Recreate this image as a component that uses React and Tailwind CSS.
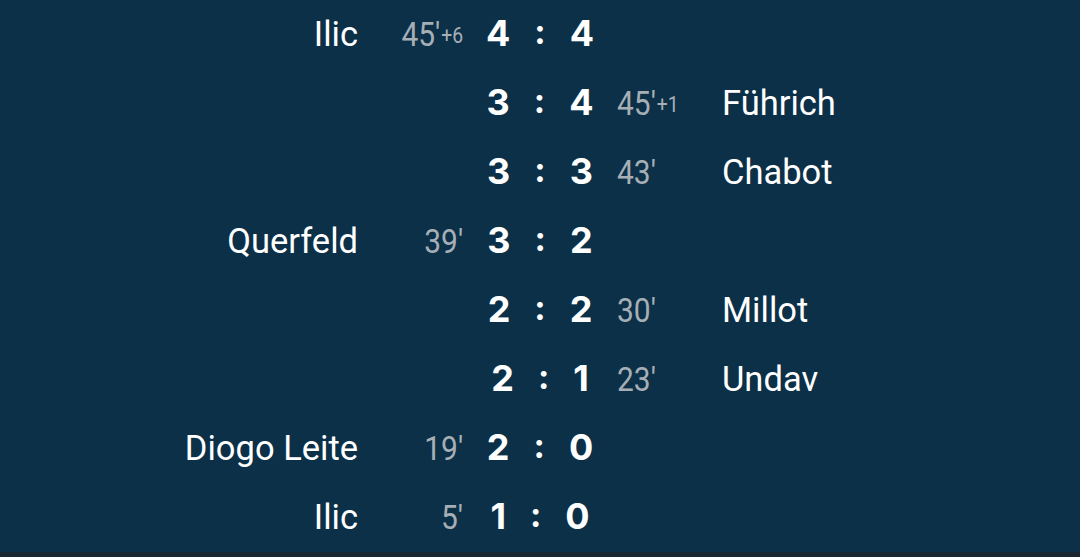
import React from "react";

const goals = [
  { home: "Ilic", homeMin: "45′", homeAdd: "+6", score: ["4", "4"] },
  { away: "Führich", awayMin: "45′", awayAdd: "+1", score: ["3", "4"] },
  { away: "Chabot", awayMin: "43′", score: ["3", "3"] },
  { home: "Querfeld", homeMin: "39′", score: ["3", "2"] },
  { away: "Millot", awayMin: "30′", score: ["2", "2"] },
  { away: "Undav", awayMin: "23′", score: ["2", "1"] },
  { home: "Diogo Leite", homeMin: "19′", score: ["2", "0"] },
  { home: "Ilic", homeMin: "5′", score: ["1", "0"] },
];

const font = { fontFamily: "Roboto, 'Liberation Sans', sans-serif" };

function Minute({ min, add, side }) {
  if (!min) return null;
  return (
    <span
      className={`inline-block text-[34px] text-[#a7afb6] leading-none scale-x-[0.88] ${
        side === "home" ? "origin-right" : "origin-left"
      }`}
      style={font}
    >
      {min}
      {add && <sup className="text-[22px] relative -top-[3px] ml-[1px]">{add}</sup>}
    </span>
  );
}

export default function App() {
  return (
    <div className="w-[1080px] h-[557px] bg-[#1a2731] overflow-hidden">
      <div className="bg-[#0b3048] h-[552px] flex flex-col">
        {goals.map((g, i) => (
          <div
            key={i}
            className="h-[69px] grid grid-cols-[358px_105px_154px_105px_1fr] items-center"
          >
            <div className="text-right text-white text-[34.5px] leading-none" style={font}>
              {g.home}
            </div>
            <div className="text-right">
              <Minute min={g.homeMin} add={g.homeAdd} side="home" />
            </div>
            <div
              className="flex justify-center items-center gap-[24px] text-white font-bold text-[36px] leading-none -mt-[3px]"
              style={{ fontFamily: "Inter, sans-serif" }}
            >
              <span>{g.score[0]}</span>
              <span className="text-[34px] -mt-[2px]">:</span>
              <span>{g.score[1]}</span>
            </div>
            <div className="text-left">
              <Minute min={g.awayMin} add={g.awayAdd} side="away" />
            </div>
            <div className="text-left text-white text-[34.5px] leading-none" style={font}>
              {g.away}
            </div>
          </div>
        ))}
      </div>
    </div>
  );
}
